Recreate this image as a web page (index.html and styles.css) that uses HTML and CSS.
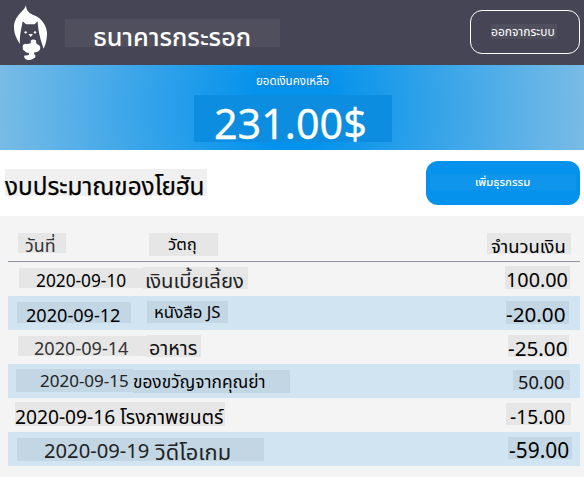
FILE: index.html
```html
<!DOCTYPE html>
<html lang="th">
<head>
<meta charset="utf-8">
<title>ธนาคารกระรอก</title>
<link rel="stylesheet" href="styles.css">
</head>
<body>
<header class="topbar">
  <svg class="logo" viewBox="42 15 99 165" width="33" height="55" aria-hidden="true">
    <path fill="#fff" d="M78 15C74 34 42 46 42 82C42 104 52 120 60 132C58 108 64 88 68 64L78 73H104L113 64C114 92 122 122 131 146C139 130 141 112 141 98C139 70 118 50 98 44C84 38 78 28 78 15Z"/>
    <circle cx="77" cy="97" r="3.5" fill="#fff"/><circle cx="105" cy="97" r="3.5" fill="#fff"/>
    <path fill="#fff" d="M85 102H99L92 111ZM92 122Q99 115 108 121L109 131Q121 135 121 144Q120 156 104 157Q100 163 106 166L106 172Q98 181 84 180Q72 177 72 167L87 165L86 158Q78 160 74 153Q66 150 69 144Q65 134 75 131Q82 134 93 129Z"/>
  </svg>
  <h1 class="chip title">ธนาคารกระรอก</h1>
  <button class="logout"><span class="chip logout-text">ออกจากระบบ</span></button>
</header>
<section class="balance">
  <div class="chip label">ยอดเงินคงเหลือ</div>
  <div class="chip total">231.00$</div>
</section>
<section class="budget">
  <h2 class="chip heading">งบประมาณของโยฮัน</h2>
  <button class="add"><span class="chip add-text">เพิ่มธุรกรรม</span></button>
</section>
<main class="ledger">
  <div class="row head"><div class="chip h-date">วันที่</div><div class="chip h-item">วัตถุ</div><div class="chip amount h-amount">จำนวนเงิน</div></div>
  <div class="row"><div class="chip d1">2020-09-10</div><div class="chip i1">เงินเบี้ยเลี้ยง</div><div class="chip amount a1">100.00</div></div>
  <div class="row alt"><div class="chip d2">2020-09-12</div><div class="chip i2">หนังสือ JS</div><div class="chip amount a2">-20.00</div></div>
  <div class="row"><div class="chip d3">2020-09-14</div><div class="chip i3">อาหาร</div><div class="chip amount a3">-25.00</div></div>
  <div class="row alt"><div class="chip d4">2020-09-15</div><div class="chip i4">ของขวัญจากคุณย่า</div><div class="chip amount a4">50.00</div></div>
  <div class="row"><div class="chip d5">2020-09-16</div><div class="chip i5">โรงภาพยนตร์</div><div class="chip amount a5">-15.00</div></div>
  <div class="row alt"><div class="chip d6">2020-09-19</div><div class="chip i6">วิดีโอเกม</div><div class="chip amount a6">-59.00</div></div>
</main>
</body>
</html>
```
FILE: styles.css
```css
* { box-sizing: border-box; }
body { margin: 0; background: #fff; color: #000; font-family: "Noto Sans", "Noto Sans Thai", sans-serif; }
h1, h2 { margin: 0; font-weight: 400; }
button { font: inherit; padding: 0; display: flex; }

/* --b is the text baseline measured from the chip's top edge */
.chip {
  flex: none;
  white-space: nowrap;
  text-align: left;
  font-size: var(--fs);
  line-height: calc(2 * var(--b) - 0.776 * var(--fs));
  background: #e6e6e6;
}

.topbar { display: flex; align-items: flex-start; height: 65px; background: #464555; color: #fff; }
.logo { flex: none; margin: 5px 0 0 14px; }
.title { --fs: 25.3px; --b: 27px; font-weight: 500; width: 215px; height: 28px; margin: 19px 0 0 18px; padding-left: 28px; background: #504f5e; }
.logout { width: 110px; height: 44px; margin: 10px 4px 0 auto; border: 1px solid #fff; border-radius: 12px; background: none; color: #fff; align-items: flex-start; }
.logout-text { --fs: 12px; --b: 13px; width: 66px; height: 15px; margin: 13px 0 0 20px; background: #504f5e; }

.balance { height: 85px; padding-top: 6px; color: #fff; background: radial-gradient(circle at center, #0492ec 0, #0492ec 40px, #78bbe6 292px); }
.label { --fs: 11.5px; --b: 14px; width: 75px; height: 16px; margin-left: 256px; background: #0d8de0; }
.total { --fs: 41.3px; --b: 45px; width: 198px; height: 47px; margin: 8px 0 0 194px; padding-left: 20px; background: #0d8de0; -webkit-text-stroke: 0.3px #fff; }

.budget { display: flex; align-items: flex-start; height: 66px; }
.heading { --fs: 24.3px; --b: 26px; width: 202px; height: 27px; margin: 19px 0 0 5px; background: #f0f0f0; -webkit-text-stroke: 0.25px #000; }
.add { width: 154px; height: 44px; margin: 11px 4px 0 auto; border: 0; border-radius: 12px; background: #0492ec; color: #fff; align-items: flex-start; }
.add-text { --fs: 11.3px; --b: 12px; font-weight: 500; width: 146px; height: 16px; margin: 13px 0 0 4px; padding-left: 45px; background: #0f96ec; }

.ledger { height: 261px; padding: 12px 4px 0 8px; background: #f4f4f4; }
.row { display: flex; align-items: flex-start; height: 34px; }
.head { border-bottom: 1px solid #9293a0; }
.alt { background: #d0e5f1; }
.alt .chip { background: #c3d6e4; }
.row .amount { margin-left: auto; }

.h-date { --fs: 17.8px; --b: 19px; width: 48px; height: 20px; margin: 5px 0 0 10px; padding-left: 7px; color: #333; }
.h-item { --fs: 16.6px; --b: 17.5px; width: 69px; height: 23px; margin: 5px 0 0 83px; padding-left: 19px; }
.h-amount { --fs: 18.4px; --b: 20px; width: 84px; height: 21px; margin: 5px 9px 0 0; padding-left: 4px; }

.d1 { --fs: 17.3px; --b: 20px; width: 124px; height: 20px; margin: 6px 0 0 11px; padding-left: 17px; }
.i1 { --fs: 20.3px; --b: 21.5px; width: 105px; height: 22px; margin-top: 5px; padding-left: 2px; color: #222; }
.a1 { --fs: 19.8px; --b: 21.5px; width: 65px; height: 23px; margin: 4px 10px 0 0; padding-left: 1px; }

.d2 { --fs: 18.1px; --b: 20.5px; width: 114px; height: 21px; margin: 6px 0 0 9px; padding-left: 9px; }
.i2 { --fs: 16.8px; --b: 18px; width: 81px; height: 22px; margin: 5px 0 0 16px; padding-left: 7px; }
.a2 { --fs: 20.7px; --b: 21.5px; width: 63px; height: 23px; margin: 5px 11px 0 0; padding-left: 0; }

.d3 { --fs: 18.1px; --b: 20px; width: 129px; height: 20px; margin: 6px 0 0 10px; padding-left: 16px; color: #333; }
.i3 { --fs: 19.7px; --b: 21px; width: 54px; height: 22px; margin-top: 5px; padding-left: 2px; color: #111; }
.a3 { --fs: 20.7px; --b: 21.5px; width: 61px; height: 22px; margin: 5px 11px 0 0; }

.d4 { --fs: 17px; --b: 18.5px; width: 117px; height: 23px; margin: 5px 0 0 8px; padding-left: 24px; color: #222; }
.i4 { --fs: 17.3px; --b: 18.5px; width: 157px; height: 23px; margin-top: 6px; color: #000; }
.a4 { --fs: 18.2px; --b: 20px; width: 57px; height: 20px; margin: 6px 10px 0 0; padding-left: 5px; color: #111; }

.d5 { --fs: 19.2px; --b: 22px; width: 105px; height: 24px; margin: 4px 0 0 7px; }
.i5 { --fs: 19.3px; --b: 22px; width: 105px; height: 24px; margin-top: 4px; }
.a5 { --fs: 19.2px; --b: 21px; width: 65px; height: 22px; margin: 5px 9px 0 0; padding-left: 4px; }

.d6 { --fs: 20.2px; --b: 20.5px; width: 138px; height: 23px; margin: 6px 0 0 9px; padding-left: 27px; color: #222; }
.i6 { --fs: 21.8px; --b: 22px; width: 109px; height: 23px; margin-top: 6px; color: #222; }
.a6 { --fs: 20.9px; --b: 21.5px; width: 64px; height: 22px; margin: 5px 8px 0 0; padding-left: 1px; }
```
